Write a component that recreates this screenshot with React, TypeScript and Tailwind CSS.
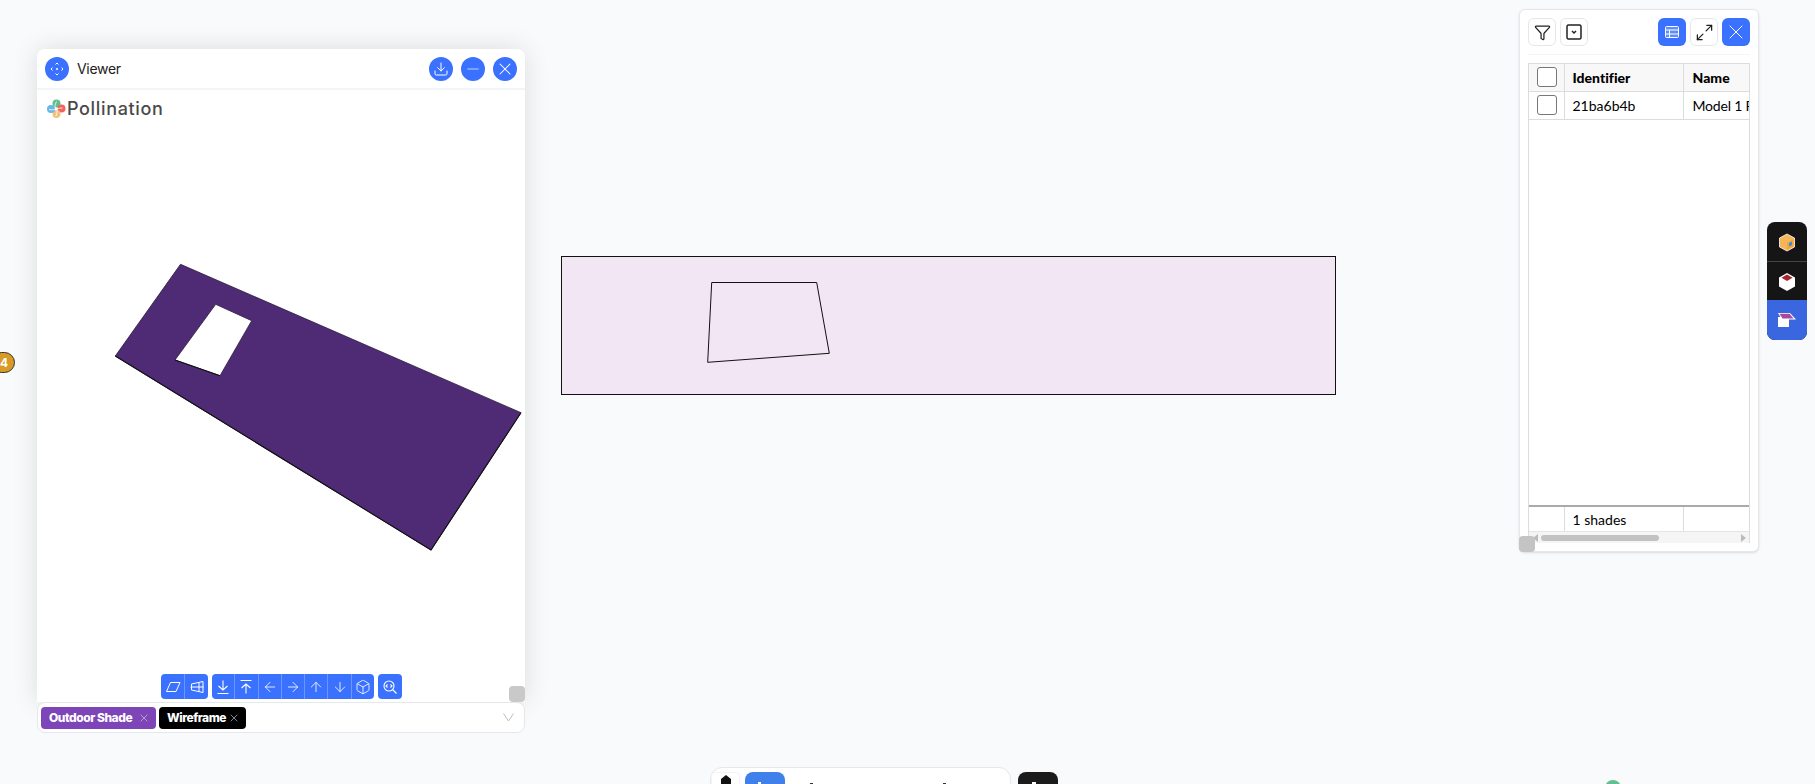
import { ArrowDown, ArrowLeft, ArrowRight, ArrowUp, Box, Download, Filter, Maximize2, Minus, X } from 'lucide-react'
import type { ReactNode } from 'react'

const ui = { fontFamily: 'Inter, sans-serif' }
const tableFont = { fontFamily: 'Lato, sans-serif' }

function RoundButton({ children }: { children: ReactNode }) {
  return (
    <button className="flex h-6 w-6 items-center justify-center rounded-full bg-[#3a72ff] text-white" type="button">
      {children}
    </button>
  )
}

function SquareButton({ children, active }: { children: ReactNode; active?: boolean }) {
  return (
    <button
      className={[
        'flex h-[28px] w-[28px] items-center justify-center rounded-md',
        active ? 'bg-[#3a72ff] text-white' : 'border border-gray-200 bg-white text-[#222]',
      ].join(' ')}
      type="button"
    >
      {children}
    </button>
  )
}

function ToolGroup({ children, className }: { children: ReactNode; className: string }) {
  return <div className={`flex h-[25px] divide-x divide-[#6b97ff] rounded bg-[#3a72ff] text-white ${className}`}>{children}</div>
}

function ToolCell({ children }: { children: ReactNode }) {
  return <span className="flex h-[25px] flex-1 items-center justify-center">{children}</span>
}

function Tag({ label, className }: { label: string; className: string }) {
  return (
    <span className={`flex h-[22px] items-center justify-between rounded pl-2 pr-[6px] text-[12px] font-extrabold tracking-[-0.45px] text-white ${className}`}>
      {label}
      <X size={12} strokeWidth={1.25} className="text-gray-300" />
    </span>
  )
}

function ViewerWindow() {
  return (
    <section className="absolute left-[37px] top-[49px] flex w-[488px] flex-col" style={ui}>
      <div className="flex h-[653px] flex-col rounded-t-lg bg-white shadow-[0_0_26px_rgba(0,0,0,0.12)]">
        <header className="flex h-[41px] shrink-0 items-center justify-between border-b-2 border-gray-100 px-2">
          <div className="flex items-center gap-2">
            <RoundButton>
              <svg width="14" height="14" viewBox="0 0 14 14" fill="none" stroke="currentColor" strokeWidth="1">
                <path d="M5.500 2.500L7 1l1.500 1.500M5.500 11.500L7 13l1.500-1.500M2.500 5.500L1 7l1.500 1.500M11.500 5.500L13 7l-1.500 1.500M6 7h2M7 6v2" />
              </svg>
            </RoundButton>
            <span className="text-[14px] tracking-[-0.3px] text-[#222]">Viewer</span>
          </div>
          <div className="flex gap-2">
            <RoundButton>
              <Download size={16} strokeWidth={1.5} />
            </RoundButton>
            <RoundButton>
              <Minus size={18} strokeWidth={1.25} className="text-[#c6d6ff]" />
            </RoundButton>
            <RoundButton>
              <X size={20} strokeWidth={1.25} />
            </RoundButton>
          </div>
        </header>

        <div className="relative flex-1">
          <div className="absolute left-[10px] top-[9px] flex items-center gap-[1px]">
            <svg width="19" height="20" viewBox="0 0 19 20">
              <circle cx="9.500" cy="4.500" r="4" fill="#5fc08d" />
              <circle cx="14.500" cy="9.500" r="4" fill="#f0635f" />
              <circle cx="9.500" cy="15" r="4" fill="#f5c27c" />
              <circle cx="4" cy="10" r="4" fill="#69b7e8" />
              <path d="M9.500 2.500C8 6 7 8 9.500 10M15.500 9C12 9 10 10 9.500 10M9 17c1-3 1.500-5 .5-7M2 10.500c3 .5 6 .5 7.500-.5" fill="none" stroke="#fff" strokeWidth="0.8" />
            </svg>
            <span className="text-[18px] font-medium leading-none tracking-[0.65px] text-[#4a4a4a]">Pollination</span>
          </div>

          <svg className="absolute left-0 top-0" width="488" height="612" viewBox="37 90 488 612">
            <path
              d="M180.500 264.300L521 412.700L431 550L115.300 356ZM215.700 304.300L251.700 320.700L220 375.700L175 360Z"
              fill="#4f2a75"
              fillRule="evenodd"
              stroke="#2a1a3a"
              strokeWidth="0.8"
            />
            <path d="M115.300 356L431 550L521 412.700M175 360L220 375.700" fill="none" stroke="#111" strokeWidth="1.1" />
          </svg>

          <div className="absolute bottom-[3px] left-[124px] flex gap-1">
            <ToolGroup className="w-[47px]">
              <ToolCell>
                <svg width="16" height="16" viewBox="0 0 16 16" fill="none" stroke="currentColor" strokeWidth="1">
                  <path d="M5.500 3.500H15L11 12.500H1.500z" />
                </svg>
              </ToolCell>
              <ToolCell>
                <svg width="16" height="16" viewBox="0 0 16 16" fill="none" stroke="currentColor" strokeWidth="1">
                  <path d="M2.500 5L14 2.500v11L2.500 11zM1.500 8h13M10 3.500v9" />
                </svg>
              </ToolCell>
            </ToolGroup>
            <ToolGroup className="w-[162px]">
              <ToolCell>
                <svg width="16" height="16" viewBox="0 0 16 16" fill="none" stroke="currentColor" strokeWidth="1.1">
                  <path d="M8 1.500v9.500M3.500 7L8 11l4.500-4M2.500 14.500h11" />
                </svg>
              </ToolCell>
              <ToolCell>
                <svg width="16" height="16" viewBox="0 0 16 16" fill="none" stroke="currentColor" strokeWidth="1.1">
                  <path d="M8 14.500V5M3.500 9L8 5l4.500 4M2.500 1.500h11" />
                </svg>
              </ToolCell>
              <ToolCell>
                <ArrowLeft size={16} strokeWidth={1.25} />
              </ToolCell>
              <ToolCell>
                <ArrowRight size={16} strokeWidth={1.25} />
              </ToolCell>
              <ToolCell>
                <ArrowUp size={16} strokeWidth={1.25} />
              </ToolCell>
              <ToolCell>
                <ArrowDown size={16} strokeWidth={1.25} />
              </ToolCell>
              <ToolCell>
                <Box size={16} strokeWidth={1.25} />
              </ToolCell>
            </ToolGroup>
            <ToolGroup className="w-[24px]">
              <ToolCell>
                <svg width="16" height="16" viewBox="0 0 16 16" fill="none" stroke="currentColor" strokeWidth="1.1">
                  <circle cx="7" cy="7" r="5" />
                  <path d="M10.500 10.500L14.500 14.500M5.500 5.500L4 7l1.500 1.500M8.500 5.500L10 7 8.500 8.500" />
                </svg>
              </ToolCell>
            </ToolGroup>
          </div>

          <span className="absolute bottom-0 right-0 h-4 w-4 rounded bg-[#c9c9c9]" />
        </div>
      </div>

      <div className="flex h-[31px] items-center justify-between rounded-lg border border-gray-200 bg-white pl-[3px] pr-[10px]">
        <div className="flex gap-[3px]">
          <Tag label="Outdoor Shade" className="w-[115px] bg-[#7e45b8]" />
          <Tag label="Wireframe" className="w-[87px] bg-black" />
        </div>
        <svg width="11" height="9" viewBox="0 0 11 9" fill="none" stroke="#bdbdbd" strokeWidth="1">
          <path d="M.5 .5L5.500 8L10.500 .5" />
        </svg>
      </div>
    </section>
  )
}

function CheckCell() {
  return (
    <td className="w-[35px] border-r border-[#dcdcdc] p-0 pl-2">
      <span className="block h-5 w-5 rounded-[3px] border border-[#777] bg-white" />
    </td>
  )
}

function TableWindow() {
  return (
    <section className="absolute left-[1519px] top-[9px] h-[543px] w-[240px] rounded-md border border-gray-200 bg-white shadow-sm" style={tableFont}>
      <div className="mx-2 flex h-[45px] items-center justify-between border-b border-gray-100">
        <div className="flex gap-[4px]">
          <SquareButton>
            <Filter size={17} strokeWidth={1.75} />
          </SquareButton>
          <SquareButton>
            <svg width="16" height="16" viewBox="0 0 16 16" fill="none" stroke="currentColor" strokeWidth="1.5">
              <rect x="1" y="1" width="14" height="14" rx="1.500" />
              <path d="M6 7l2 2 2-2" />
            </svg>
          </SquareButton>
        </div>
        <div className="flex gap-[4px]">
          <SquareButton active>
            <svg width="16" height="14" viewBox="0 0 16 14" fill="none" stroke="currentColor" strokeWidth="1">
              <rect x="1.500" y="1.500" width="13" height="11" rx="1" fill="#ffffff30" />
              <path d="M1.500 5h13M1.500 9h13M5.500 5v7.500" />
            </svg>
          </SquareButton>
          <SquareButton>
            <Maximize2 size={19} strokeWidth={1.6} />
          </SquareButton>
          <SquareButton active>
            <X size={24} strokeWidth={1} />
          </SquareButton>
        </div>
      </div>

      <div className="mx-2 mt-[8px] flex h-[480px] flex-col overflow-hidden border border-b-0 border-[#dcdcdc]">
        <table className="w-[300px] table-fixed border-collapse text-[14px] text-black">
          <tbody>
            <tr className="h-[27px] border-b border-[#dcdcdc] bg-[#f8f8f8] font-black">
              <CheckCell />
              <td className="w-[119px] border-r border-[#dcdcdc] pl-2 tracking-[0.01px]">Identifier</td>
              <td className="pl-[9px]">Name</td>
            </tr>
            <tr className="h-7 border-b border-[#dcdcdc]">
              <CheckCell />
              <td className="border-r border-[#dcdcdc] pl-2">21ba6b4b</td>
              <td className="whitespace-nowrap pl-[9px] tracking-[-0.2px]">Model 1 Room</td>
            </tr>
          </tbody>
        </table>

        <div className="flex-1" />

        <table className="w-[300px] table-fixed border-collapse border-t-2 border-[#aaa] text-[14px] text-black">
          <tbody>
            <tr className="h-[25px]">
              <td className="w-[35px] border-r border-[#dcdcdc]" />
              <td className="w-[119px] border-r border-[#dcdcdc] pl-2">1 shades</td>
              <td />
            </tr>
          </tbody>
        </table>

        <div className="flex h-[12px] shrink-0 items-center justify-between border-t border-[#e5e5e5] bg-[#f5f5f5] pl-[4px] pr-[3px]">
          <span className="h-0 w-0 border-y-[4px] border-r-[5px] border-y-transparent border-r-[#bbb]" />
          <span className="ml-[3px] mr-auto h-[6px] w-[118px] rounded-full bg-[#c2c2c2]" />
          <span className="h-0 w-0 border-y-[4px] border-l-[5px] border-y-transparent border-l-[#bbb]" />
        </div>
      </div>

      <span className="absolute bottom-[-1px] left-[-1px] h-4 w-4 rounded bg-[#c4c4c4]" />
    </section>
  )
}

function SideBar() {
  return (
    <nav className="absolute left-[1767px] top-[222px] w-10 overflow-hidden rounded-lg bg-[#151515]">
      <div className="flex h-10 items-center justify-center border-b border-[#444] pt-[1px]">
        <svg width="18" height="19" viewBox="0 0 18 19">
          <path d="M9 1l7.500 4v9L9 18l-7.500-4V5z" fill="#f7b55a" stroke="#fff" strokeWidth="0.8" />
          <path d="M9 9.500V17l6.500-3.500V6z" fill="#f4a63c" />
          <path d="M11 10l3-1.500v3.500l-3 1.500z" fill="#2f8fe0" />
        </svg>
      </div>
      <div className="flex h-[38px] items-center justify-center pt-[1px]">
        <svg width="16" height="18" viewBox="0 0 16 18">
          <path d="M8 0l8 4.500v9L8 18l-8-4.500v-9z" fill="#fff" />
          <path d="M8 1.500l5.500 3.200L8 8 2.500 4.700z" fill="#a3262d" />
        </svg>
      </div>
      <div className="flex h-10 items-center justify-center bg-[#3a66e0]">
        <svg width="18" height="14" viewBox="0 0 18 14">
          <path d="M0 4h11v10H0z" fill="#fff" />
          <path d="M0 0h12l6 6.500H4z" fill="#fff" />
          <path d="M1.500 .8h10L15.500 5.500H4.500z" fill="#a64a9e" />
        </svg>
      </div>
    </nav>
  )
}

function BottomBar() {
  return (
    <>
      <div className="absolute left-[710px] top-[767px] flex h-10 w-[301px] items-start gap-[5px] rounded-t-xl border border-gray-200 bg-white pt-1">
        <span className="flex h-8 w-[29px] justify-center rounded-sm border border-gray-100 bg-white pt-[2px]">
          <svg width="12" height="14" viewBox="0 0 12 14">
            <path d="M6 0l5 4v10H1V4z" fill="#111" />
          </svg>
        </span>
        <span className="relative h-10 w-10 rounded-lg bg-[#3f80ea]">
          <span className="absolute left-[13px] top-[10px] h-1 w-[3px] bg-white" />
        </span>
        <span className="ml-5 mt-[11px] h-[2px] w-[3px] bg-[#333]" />
        <span className="ml-[125px] mt-[11px] h-[2px] w-[3px] bg-[#333]" />
      </div>
      <div className="absolute left-[1018px] top-[772px] h-10 w-10 rounded-lg bg-[#1b1b1b]">
        <span className="absolute left-[14px] top-[10px] h-1 w-1 bg-white" />
      </div>
      <div className="absolute left-[1605px] top-[780px] h-4 w-4 rounded-full bg-[#63bf8f]" />
    </>
  )
}

export default function App() {
  return (
    <main className="relative h-[784px] w-full overflow-hidden bg-[#f9fafc]">
      <span
        className="absolute left-[-9px] top-[352px] flex h-[21px] w-[24px] items-center justify-end rounded-full border border-[#333] bg-[#d99a26] pr-[6px] text-[12px] font-bold text-white"
        style={ui}
      >
        4
      </span>

      <ViewerWindow />

      <svg className="absolute left-[561px] top-[256px]" width="775" height="139" viewBox="561 256 775 139">
        <rect x="561.500" y="256.500" width="774" height="138" fill="#f2e6f4" stroke="#111" />
        <path d="M711.700 282.500L816.700 282.500L829.300 353.300L707.700 362.300Z" fill="none" stroke="#111" />
      </svg>

      <TableWindow />
      <SideBar />
      <BottomBar />
    </main>
  )
}
